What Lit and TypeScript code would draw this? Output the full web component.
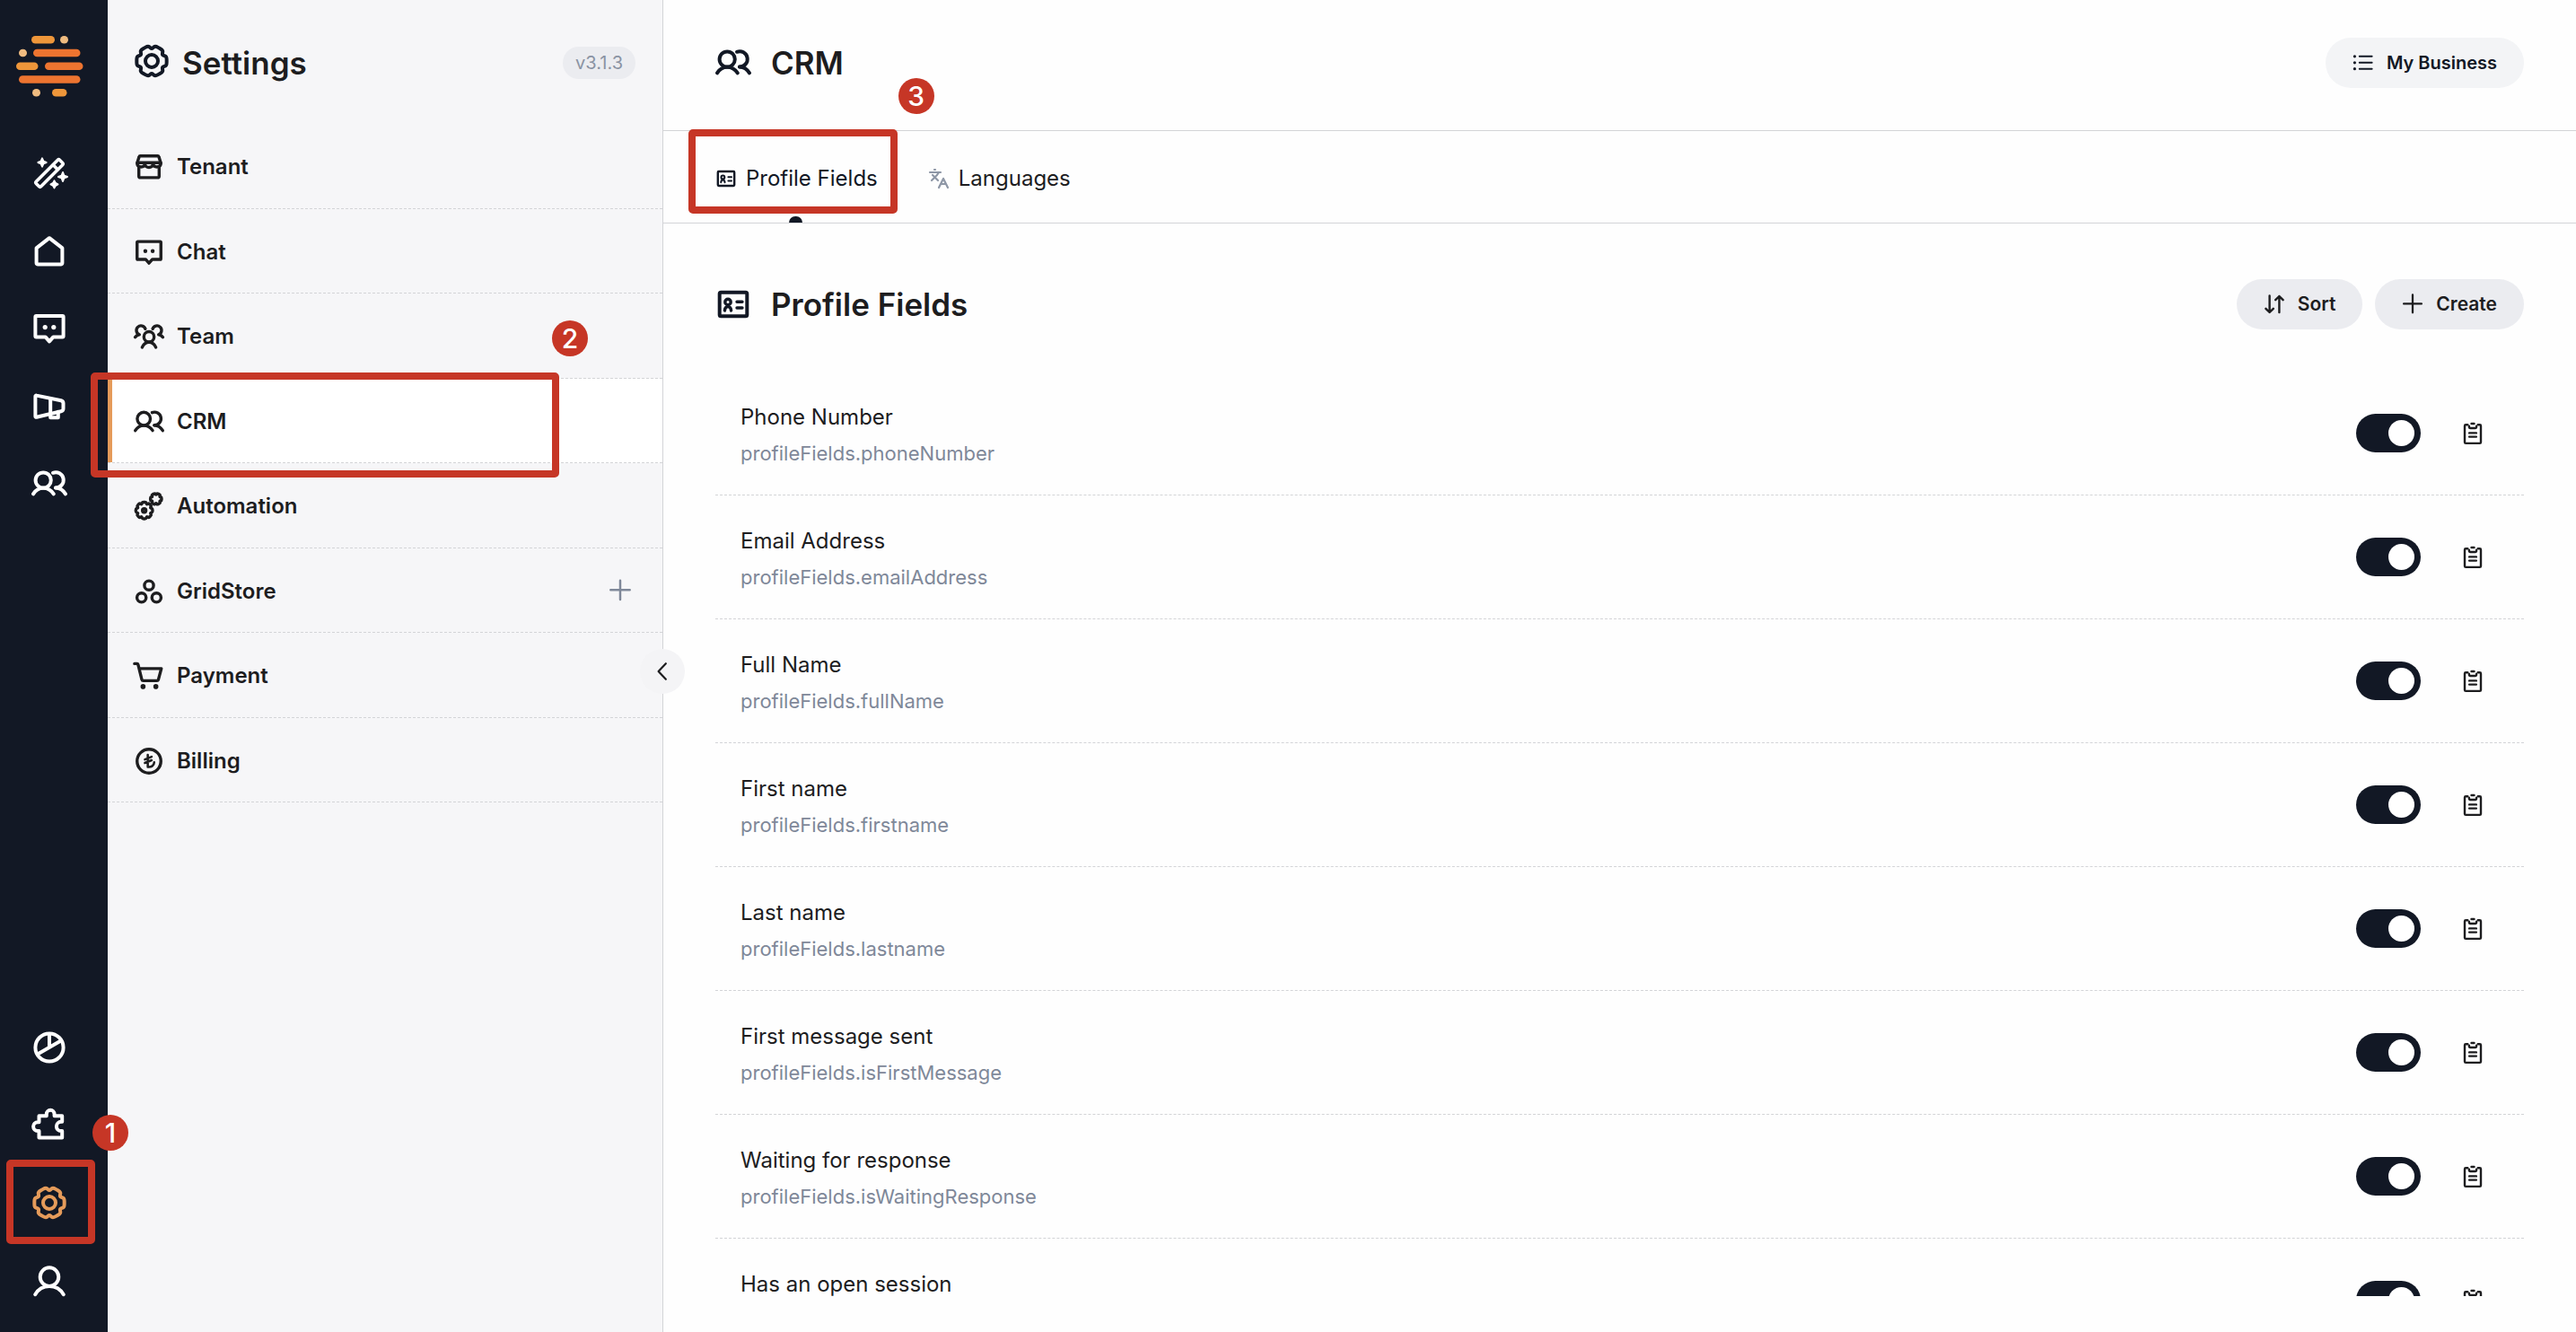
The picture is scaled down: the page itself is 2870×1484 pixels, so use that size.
import { LitElement, html, svg, css, nothing, SVGTemplateResult } from "lit";
import { customElement, property, state } from "lit/decorators.js";
import { classMap } from "lit/directives/class-map.js";

/* Outline of a cog: each tooth has two outer corners, with one notch between teeth. */
function cog(cx: number, cy: number, teeth: number, outer: number, notch: number, spread: number): string {
  const pts: [number, number][] = [];
  const step = (Math.PI * 2) / teeth;
  for (let i = 0; i < teeth; i++) {
    const a = i * step;
    for (const [angle, r] of [[a - spread, outer], [a + spread, outer], [a + step / 2, notch]]) {
      pts.push([cx + r * Math.cos(angle), cy + r * Math.sin(angle)]);
    }
  }
  const mix = (p: [number, number], q: [number, number], t: number) =>
    `${(p[0] + (q[0] - p[0]) * t).toFixed(2)} ${(p[1] + (q[1] - p[1]) * t).toFixed(2)}`;
  let d = "";
  pts.forEach((p, i) => {
    const prev = pts[(i + pts.length - 1) % pts.length];
    const next = pts[(i + 1) % pts.length];
    d += `${i ? "L" : "M"}${mix(p, prev, 0.36)}Q${p[0].toFixed(2)} ${p[1].toFixed(2)} ${mix(p, next, 0.36)}`;
  });
  return d + "Z";
}

const sparkle = (x: number, y: number, r: number) =>
  svg`<path class="solid" stroke-width="2" d="M${x} ${y - r}L${x + 1.4} ${y - 1.4}L${x + r} ${y}L${x + 1.4} ${y + 1.4}L${x} ${y + r}L${x - 1.4} ${y + 1.4}L${x - r} ${y}L${x - 1.4} ${y - 1.4}Z"/>`;

const ICONS: Record<string, SVGTemplateResult> = {
  wand: svg`
    <g transform="rotate(-45 20 20)" stroke-width="3.6"><rect x="1.5" y="16.2" width="37" height="7.6" rx="1.5"/><path d="M29.5 16.5v7"/></g>
    ${sparkle(12, 8, 4.6)}${sparkle(35, 24, 5)}${sparkle(25.5, 32.4, 4)}`,
  home: svg`<path d="M20 5.2L5.6 16.4V33a1.6 1.6 0 0 0 1.6 1.6h25.6A1.6 1.6 0 0 0 34.4 33V16.4Z"/>`,
  chat: svg`<path d="M5.4 6h29.2a1 1 0 0 1 1 1v21.4a1 1 0 0 1-1 1H24.4L20 34.4l-4.4-5H5.4a1 1 0 0 1-1-1V7a1 1 0 0 1 1-1Z"/>
    <circle class="fill" cx="15.2" cy="18.6" r="2.6"/><circle class="fill" cx="24.8" cy="18.6" r="2.6"/>`,
  megaphone: svg`<path d="M4.4 8.6a1 1 0 0 1 1.3-1L33 13.2q2.5.6 2.5 3v6q0 2.4-2.5 3L5.7 31.8a1 1 0 0 1-1.3-1Z"/>
    <path d="M21.2 11.5v20.7h8.6v-6.5"/>`,
  users: svg`<circle cx="13.2" cy="16" r="8.6"/><path d="M2 31.4c2.6-4.3 6.8-6.6 11.2-6.6s8.8 2.3 11.6 6.6"/>
    <path d="M24 7.8a8.6 8.6 0 1 1 3 16.6"/><path d="M27 24.6c4.6.2 8.4 2.6 11 6.8"/>`,
  pie: svg`<circle cx="20" cy="20" r="15.6"/><path d="M20 5v15M6.8 27.4L32.8 12.6"/>`,
  puzzle: svg`<path d="M8.5 9.2H16.8V7.2a4.4 4.4 0 0 1 8.8 0v2h8.6v6.6h-1.2a5.1 5.1 0 0 0 0 10.2h1.2v7.6H8.5V26H7a4.9 4.9 0 0 1 0-9.8h1.5Z"/>`,
  gear: svg`<path d="${cog(20, 20, 6, 17.4, 13.4, 0.29)}"/><circle cx="20" cy="20" r="7"/>`,
  user: svg`<circle cx="20" cy="15.6" r="10.3"/><path d="M4.2 35.2C7.6 29.4 13.2 26 20 26s12.4 3.4 15.8 9.2"/>`,
  store: svg`<path d="M8.6 5.5h22.8a1.5 1.5 0 0 1 1.5 1.1l2.6 8v1.6a5.2 4.4 0 0 1-10.3 0a5.2 4.4 0 0 1-10.4 0a5.2 4.4 0 0 1-10.3 0v-1.6l2.6-8a1.5 1.5 0 0 1 1.5-1.1Z"/>
    <path d="M4.8 14.4h30.4M6.7 20.4V32a2 2 0 0 0 2 2h22.6a2 2 0 0 0 2-2V20.4"/>`,
  team: svg`<circle cx="20" cy="20.3" r="6.7"/><path d="M11 34c2-4.2 5.3-6.6 9-6.6s7 2.4 9 6.6"/>
    <path d="M15.2 9.8a6 6 0 1 0-7.8 7.6c-2.4.2-4.2 1.4-5.6 3.4M24.8 9.8a6 6 0 1 1 7.8 7.6c2.4.2 4.2 1.4 5.6 3.4"/>`,
  automation: svg`<path d="${cog(13.7, 25.6, 8, 11.2, 8.6, 0.22)}"/><circle cx="13.7" cy="25.6" r="2.3"/>
    <path d="${cog(29.2, 10.4, 6, 7.6, 5.4, 0.3)}"/>`,
  circles: svg`<circle cx="20" cy="12" r="6"/><circle cx="10.2" cy="28" r="6"/><circle cx="29.8" cy="28" r="6"/>`,
  cart: svg`<path d="M1 4h3.2a1.6 1.6 0 0 1 1.5 1.2L10.6 24.8a2 2 0 0 0 2 1.5h17.8a2 2 0 0 0 1.9-1.4L36.2 10.4H7.2"/>
    <circle class="fill" cx="12.2" cy="34" r="3.3"/><circle class="fill" cx="29" cy="34" r="3.3"/>`,
  lira: svg`<circle cx="20" cy="20" r="15.6"/><path stroke-width="3" d="M18.4 11.8V27.6c5 .6 8.2-2 8.4-6M14.6 17.8l8.8-3.6M14.6 22.4l8.8-3.6"/>`,
  card: svg`<rect x="4.7" y="6.7" width="30.6" height="26.6" rx="1.6"/>
    <circle cx="14" cy="17.4" r="3.2" stroke-width="3.4"/><path stroke-width="3.4" d="M10.4 27c.2-2.6 1.6-4.4 3.6-4.4s3.4 1.8 3.6 4.4M24 17.2h6M24 24h6"/>`,
  languages: svg`<g transform="scale(1.667)" stroke-width="2.2"><path d="m5 8 6 6M4 14l6-6 2-3M2 5h12M7 2h1M22 22l-5-10-5 10M14 18h6"/></g>`,
  list: svg`<path stroke-width="3.4" d="M13 8h23M13 19.6h23M13 31.2h23"/>
    <circle class="fill" cx="4" cy="8" r="2.7"/><circle class="fill" cx="4" cy="19.6" r="2.7"/><circle class="fill" cx="4" cy="31.2" r="2.7"/>`,
  sort: svg`<path stroke-width="4" d="M11 4v30M4 28l7 7 7-7M29 35V5M22 12l7-7 7 7"/>`,
  plus: svg`<path stroke-width="3.8" d="M20 2.5v33M3.5 19h33"/>`,
  chevron: svg`<path stroke-width="4" d="M27 4L12 20l15 16"/>`,
  clipboard: svg`<path d="M10.5 3.8H7a2 2 0 0 0-2 2v30.4a2 2 0 0 0 2 2h26a2 2 0 0 0 2-2V5.8a2 2 0 0 0-2-2h-3.5"/>
    <path d="M13.2 6.2v1.400a2.400 2.400 0 0 0 2.400 2.400h8.800a2.400 2.400 0 0 0 2.400-2.400V6.200M17.500 1.600h5M13.500 19h13M13.500 26h13"/>`,
};

@customElement("ui-icon")
class UiIcon extends LitElement {
  @property() name = "";

  static styles = css`
    :host { display: block; flex: none; width: var(--icon-size, 40px); height: var(--icon-size, 40px); }
    .glyph { display: block; width: 100%; height: 100%; overflow: visible; fill: none; stroke: currentColor; stroke-width: 4; stroke-linecap: round; stroke-linejoin: round; }
    .fill { fill: currentColor; stroke: none; }
    .solid { fill: currentColor; }
  `;

  render() {
    return html`<svg class="glyph" viewBox="0 0 40 40" aria-hidden="true">${ICONS[this.name] ?? nothing}</svg>`;
  }
}

interface NavEntry { icon: string; label: string; step?: number; addable?: boolean; }
interface Field { label: string; key: string; enabled: boolean; }

const RAIL_TOP: NavEntry[] = [
  { icon: "wand", label: "Assistant" },
  { icon: "home", label: "Home" },
  { icon: "chat", label: "Chat" },
  { icon: "megaphone", label: "Campaigns" },
  { icon: "users", label: "Contacts" },
];
const RAIL_BOTTOM: NavEntry[] = [
  { icon: "pie", label: "Reports" },
  { icon: "puzzle", label: "Integrations" },
  { icon: "gear", label: "Settings", step: 1 },
  { icon: "user", label: "Account" },
];
const SECTIONS: NavEntry[] = [
  { icon: "store", label: "Tenant" },
  { icon: "chat", label: "Chat" },
  { icon: "team", label: "Team" },
  { icon: "users", label: "CRM", step: 2 },
  { icon: "automation", label: "Automation" },
  { icon: "circles", label: "GridStore", addable: true },
  { icon: "cart", label: "Payment" },
  { icon: "lira", label: "Billing" },
];

@customElement("app-root")
class AppRoot extends LitElement {
  @state() private fields: Field[] = [
    { label: "Phone Number", key: "profileFields.phoneNumber", enabled: true },
    { label: "Email Address", key: "profileFields.emailAddress", enabled: true },
    { label: "Full Name", key: "profileFields.fullName", enabled: true },
    { label: "First name", key: "profileFields.firstname", enabled: true },
    { label: "Last name", key: "profileFields.lastname", enabled: true },
    { label: "First message sent", key: "profileFields.isFirstMessage", enabled: true },
    { label: "Waiting for response", key: "profileFields.isWaitingResponse", enabled: true },
    { label: "Has an open session", key: "", enabled: true },
  ];

  static styles = css`
    :host {
      --navy: #121825; --ink: #1d1d1f; --muted: #7f8899; --line: #d3d4d7; --red: #c63626; --amber: #e59b5a;
      display: flex; height: 100vh; overflow: hidden; background: #fefefe; color: var(--ink);
      font: 400 24px/40px Inter, "Liberation Sans", sans-serif;
    }
    * { box-sizing: border-box; }
    ul, h1, h2, p { margin: 0; padding: 0; list-style: none; font-weight: inherit; }
    a { color: inherit; text-decoration: none; }
    button { margin: 0; padding: 0; border: 0; background: none; color: inherit; font: inherit; cursor: pointer; }

    .rail { flex: none; width: 120px; padding: 40px 10px 14px 0; display: flex; flex-direction: column; background: var(--navy); color: #fff; }
    .logo { width: 76px; height: 68px; margin: 0 auto 42px; display: block; }
    .rail-list { display: grid; grid-auto-rows: 86px 87px; }
    .rail-list.bottom { margin-top: auto; }
    .rail-item { position: relative; }
    .rail-link { height: 100%; display: grid; place-items: center; }
    .rail-link.current { color: var(--amber); }

    .panel { position: relative; flex: none; width: 619px; background: #f6f6f8; border-right: 1px solid var(--line); }
    .panel-head { height: 138px; padding: 42px 30px 40px 29px; display: flex; align-items: flex-start; }
    .panel-head > * { height: 56px; display: flex; align-items: center; }
    .panel-icon { color: var(--navy); padding-bottom: 4px; }
    h1.title, h2.title { font-size: 35px; font-weight: 600; }
    .panel-head .title { margin-left: 14px; }
    .version { margin-left: auto; }
    .version-pill { padding: 0 14px; border-radius: 18px; background: #ebecf0; color: #8a93a3; font-size: 20px; line-height: 36px; }
    .sections { display: grid; grid-auto-rows: 95px 94px; }
    .section { position: relative; display: flex; align-items: center; border-bottom: 1px dashed var(--line); }
    .section.current { background: #fff; }
    .section.current::before { content: ""; align-self: stretch; width: 5px; margin-right: -5px; background: var(--amber); }
    .section-link { flex: 1; height: 100%; padding: 2px 0 0 29px; display: flex; align-items: center; gap: 14px; font-weight: 600; --icon-size: 34px; }
    .add { margin-right: 34px; color: var(--muted); --icon-size: 26px; }
    .collapse { position: absolute; top: 723px; right: -25px; width: 50px; height: 50px; border-radius: 50%; background: #f4f4f6; display: grid; place-items: center; --icon-size: 22px; }

    .main { flex: 1; min-width: 0; display: flex; flex-direction: column; padding-bottom: 40px; }
    .bar { flex: none; display: flex; align-items: center; padding: 0 58px; border-bottom: 1px solid var(--line); }
    .bar.top { height: 146px; padding-bottom: 5px; }
    .bar.tabs { height: 103px; gap: 56px; }
    .heading { display: flex; align-items: center; gap: 22px; color: var(--ink); }
    .heading ui-icon { color: var(--navy); }
    .actions { margin-left: auto; display: flex; gap: 14px; }
    .pill { height: 56px; padding: 0 30px; border-radius: 28px; display: flex; align-items: center; gap: 14px; background: #ebecf0; font-size: 21px; font-weight: 600; --icon-size: 24px; }
    .pill.light { background: #f3f4f6; color: var(--navy); font-size: 20px; }
    .tab { position: relative; height: 100%; padding-top: 3px; display: flex; align-items: center; gap: 10px; --icon-size: 24px; }
    .tab.quiet ui-icon { color: #8e97a6; }
    .tab.current { color: var(--navy); }
    .tab.current::after { content: ""; position: absolute; left: 50%; bottom: 0; width: 15px; height: 7px; margin-left: -8px; border-radius: 8px 8px 0 0; background: var(--navy); }
    .content-head { flex: none; padding: 62px 58px 47px; display: flex; align-items: center; }
    .fields { flex: 1; min-height: 0; overflow: hidden; margin: 0 58px; }
    .field { height: 138px; padding: 4px 45px 0 28px; display: flex; align-items: center; border-bottom: 1px dashed var(--line); }
    .field-text { flex: 1; height: 80px; }
    .field-label { display: block; }
    .field-key { font-size: 22px; color: var(--muted); }
    .switch { appearance: none; flex: none; width: 72px; height: 43px; margin: 0 46px 4px 0; padding: 7px; border-radius: 22px; background: #c9ccd3; display: flex; cursor: pointer; }
    .switch::before { content: ""; width: 29px; height: 29px; border-radius: 50%; background: #fff; }
    .switch:checked { background: var(--navy); justify-content: flex-end; }
    .copy { margin-bottom: 4px; --icon-size: 24px; }

    .mark { position: absolute; z-index: 5; border: 8px solid var(--red); border-radius: 5px; pointer-events: none; }
    .badge { position: absolute; z-index: 5; width: 40px; height: 40px; border-radius: 50%; background: var(--red); color: #fff; font-size: 30px; font-weight: 500; text-align: center; pointer-events: none; }
    .mark.s1 { inset: -5px 4px -3px 7px; }
    .badge.s1 { left: 103px; top: -55px; }
    .mark.s2 { inset: -7px 115px -17px -19px; }
    .badge.s2 { right: 83px; top: -65px; }
    .mark.s3 { inset: -2px -22px 10px -30px; }
    .badge.s3 { right: -63px; top: -59px; }
  `;

  private toggle(index: number) {
    this.fields = this.fields.map((f, i) => (i === index ? { ...f, enabled: !f.enabled } : f));
  }

  private callout(step?: number) {
    return step ? html`<span class="mark s${step}"></span><span class="badge s${step}">${step}</span>` : nothing;
  }

  private logo() {
    const bar = (x: number, row: number, w: number, color: string) =>
      svg`<rect x="${x}" y="${row * 14.75}" width="${w}" height="8.6" rx="4.3" fill="${color}"/>`;
    const [pale, mid, deep] = ["#efbb80", "#ee963a", "#ed7430"];
    return html`<svg class="logo" viewBox="0 0 76 68" role="img" aria-label="Logo">
      ${bar(18, 0, 26, mid)}${bar(50, 0, 9, pale)}
      ${bar(4, 1, 9, pale)}${bar(20, 1, 52.5, deep)}
      ${bar(1, 2, 24.5, mid)}${bar(33, 2, 42.5, deep)}
      ${bar(4, 3, 68.5, deep)}
      ${bar(19, 4, 9, pale)}${bar(41, 4, 16.5, mid)}
    </svg>`;
  }

  private railList(entries: NavEntry[], bottom: boolean) {
    return html`<ul class=${classMap({ "rail-list": true, bottom })}>
      ${entries.map((e) => html`<li class="rail-item">
        <a href="#${e.label.toLowerCase()}" aria-label=${e.label} class=${classMap({ "rail-link": true, current: !!e.step })}><ui-icon name=${e.icon}></ui-icon></a>
        ${this.callout(e.step)}
      </li>`)}
    </ul>`;
  }

  render() {
    return html`
      <nav class="rail" aria-label="Main">
        ${this.logo()}${this.railList(RAIL_TOP, false)}${this.railList(RAIL_BOTTOM, true)}
      </nav>
      <aside class="panel">
        <header class="panel-head">
          <span class="panel-icon"><ui-icon name="gear"></ui-icon></span>
          <h2 class="title">Settings</h2>
          <span class="version"><span class="version-pill">v3.1.3</span></span>
        </header>
        <ul class="sections">
          ${SECTIONS.map((s) => html`<li class=${classMap({ section: true, current: !!s.step })}>
            <a class="section-link" href="#settings-${s.label.toLowerCase()}"><ui-icon name=${s.icon}></ui-icon>${s.label}</a>
            ${s.addable ? html`<button class="add" aria-label="Add to ${s.label}"><ui-icon name="plus"></ui-icon></button>` : nothing}
            ${this.callout(s.step)}
          </li>`)}
        </ul>
        <button class="collapse" aria-label="Collapse"><ui-icon name="chevron"></ui-icon></button>
      </aside>
      <main class="main">
        <header class="bar top">
          <h1 class="heading title"><ui-icon name="users"></ui-icon>CRM</h1>
          <div class="actions"><button class="pill light"><ui-icon name="list"></ui-icon>My Business</button></div>
        </header>
        <nav class="bar tabs" aria-label="CRM">
          <a class="tab current" href="#profile-fields"><ui-icon name="card"></ui-icon>Profile Fields${this.callout(3)}</a>
          <a class="tab quiet" href="#languages"><ui-icon name="languages"></ui-icon>Languages</a>
        </nav>
        <div class="content-head">
          <h2 class="heading title"><ui-icon name="card"></ui-icon>Profile Fields</h2>
          <div class="actions">
            <button class="pill"><ui-icon name="sort"></ui-icon>Sort</button>
            <button class="pill"><ui-icon name="plus"></ui-icon>Create</button>
          </div>
        </div>
        <ul class="fields">
          ${this.fields.map((f, i) => html`<li class="field">
            <div class="field-text">
              <label class="field-label" for="field-${i}">${f.label}</label>
              <p class="field-key">${f.key}</p>
            </div>
            <input class="switch" type="checkbox" role="switch" id="field-${i}" .checked=${f.enabled} @change=${() => this.toggle(i)} />
            <button class="copy" aria-label="Copy ${f.label}"><ui-icon name="clipboard"></ui-icon></button>
          </li>`)}
        </ul>
      </main>
    `;
  }
}
